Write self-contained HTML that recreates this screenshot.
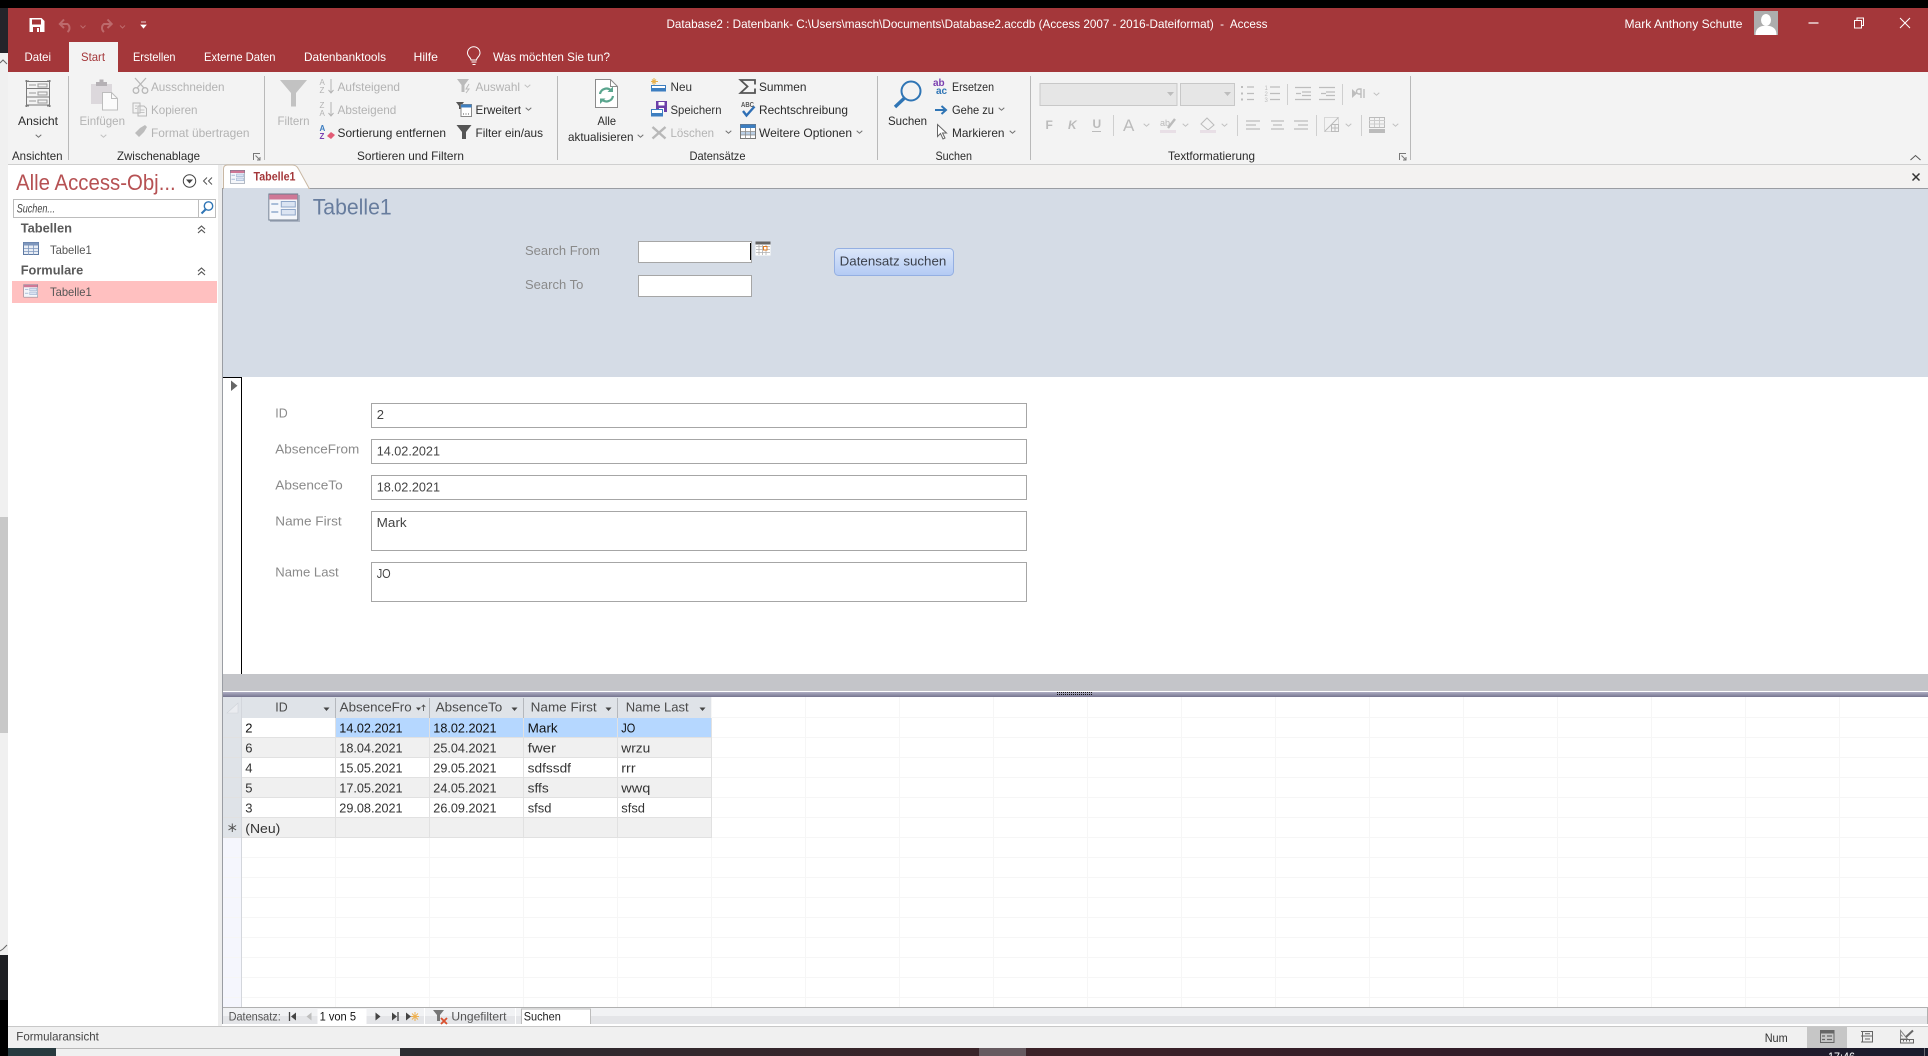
<!DOCTYPE html>
<html lang="de">
<head>
<meta charset="utf-8">
<title>Database2 - Access</title>
<style>
html,body{margin:0;padding:0;width:1928px;height:1056px;overflow:hidden;background:#000}
svg{display:block;position:absolute;left:0;top:0}
text{font-family:"Liberation Sans",sans-serif;font-size:12px;fill:#2b2b2b;white-space:pre}
.w{fill:#fff}
.d{fill:#b3b3b3}
.n{fill:#333}
.f{font-size:13px;fill:#444}
.l{font-size:13px;fill:#8a8a8a}
.g{font-size:13px;fill:#333}
.h{font-size:13px;fill:#4a4a4a}
.b{font-weight:bold;font-size:13px;fill:#5a5a5a}
.s{font-size:12px;fill:#555}
</style>
</head>
<body>
<svg width="1928" height="1056" viewBox="0 0 1928 1056" xmlns="http://www.w3.org/2000/svg">
<defs>
<linearGradient id="task" x1="0" x2="1" y1="0" y2="0">
<stop offset="0" stop-color="#273b40"/><stop offset=".22" stop-color="#2c2c30"/><stop offset=".55" stop-color="#3c2228"/><stop offset=".8" stop-color="#301c28"/><stop offset="1" stop-color="#191b2c"/>
</linearGradient>
<linearGradient id="btn" x1="0" x2="0" y1="0" y2="1"><stop offset="0" stop-color="#dce7f9"/><stop offset="1" stop-color="#b3caf4"/></linearGradient>
<linearGradient id="split" x1="0" x2="0" y1="0" y2="1"><stop offset="0" stop-color="#b0afc4"/><stop offset="1" stop-color="#75748f"/></linearGradient>
<symbol id="chev" viewBox="0 0 7 4"><path d="M.7.7 3.5 3.2 6.3.7" fill="none" stroke="#6f6f6f" stroke-width="1"/></symbol>
<symbol id="chevd" viewBox="0 0 7 4"><path d="M.7.7 3.5 3.2 6.3.7" fill="none" stroke="#c0c0c0" stroke-width="1"/></symbol>
<symbol id="frm" viewBox="0 0 30 27">
<rect x="0" y="0" width="30" height="27" fill="#6c7a8c"/>
<rect x="1" y="1" width="28" height="25" fill="#f4f6fa"/>
<rect x="1" y="1" width="28" height="5" fill="#cf7896"/>
<rect x="3" y="9.500" width="7" height="2" fill="#a9bdd8"/>
<rect x="3" y="17.500" width="7" height="2" fill="#a9bdd8"/>
<rect x="13" y="8" width="14" height="5.500" fill="#dbe4f2" stroke="#8fa6c8"/>
<rect x="13" y="16" width="14" height="5.500" fill="#dbe4f2" stroke="#8fa6c8"/>
</symbol>
<symbol id="dbl" viewBox="0 0 9 9"><path d="M1 4.200 4.500 1 8 4.200M1 8 4.500 4.800 8 8" fill="none" stroke="#555" stroke-width="1.100"/></symbol>
</defs>

<!-- backdrop -->
<rect width="1928" height="1056" fill="#000"/>
<rect x="0" y="0" width="8" height="53" fill="#23242a"/>
<rect x="0" y="0" width="1928" height="8" fill="#000"/>
<rect x="0" y="53" width="8" height="902" fill="#f0f0f0"/>
<rect x="0" y="517" width="8" height="216" fill="#c8c8c8"/>
<path d="M0 63 3 60 7 64M0 951 3 949 7 945" fill="none" stroke="#666" stroke-width="1"/>
<rect x="0" y="955" width="8" height="45" fill="#1f2024"/>

<!-- title bar -->
<rect x="8" y="8" width="1920" height="64" fill="#a4373a"/>
<path d="M29.500 18h12l3 3v11h-15z" fill="#fff"/>
<rect x="32" y="19.500" width="9" height="5" fill="#a4373a"/>
<rect x="33" y="27" width="7" height="5" fill="#a4373a"/><rect x="37" y="28" width="2" height="4" fill="#fff"/>
<g fill="none" stroke="#bd6a6c" stroke-width="2">
<path d="M60 24h7.500a5 5 0 0 1 0 8"/><path d="M64 19.500 59.800 24 64 28"/>
<path d="M111.500 24H104a5 5 0 0 0 0 8"/><path d="M107.500 19.500 111.700 24 107.500 28"/>
</g>
<path d="M80.500 25.500 83 28l2.500-2.500M120 25.500l2.500 2.500 2.500-2.500" fill="none" stroke="#bd6a6c"/>
<path d="M141 22h5M141 25h5l-2.500 3z" fill="#fff" stroke="#fff" stroke-width=".8"/>
<text class="w" x="666.500" y="28" textLength="601" lengthAdjust="spacingAndGlyphs">Database2 : Datenbank- C:\Users\masch\Documents\Database2.accdb (Access 2007 - 2016-Dateiformat)  -  Access</text>
<text class="w" x="1624.500" y="28" textLength="118" lengthAdjust="spacingAndGlyphs">Mark Anthony Schutte</text>
<rect x="1754" y="11" width="24" height="24" fill="#adadad"/>
<ellipse cx="1766" cy="20" rx="5" ry="6" fill="#fff"/>
<path d="M1755.500 35c0-6 3-8 7-9h7c4 1 7 3 7 9z" fill="#fff"/>
<path d="M1808.500 23h10" stroke="#fff" stroke-width="1.200"/>
<path d="M1854.500 20.500h7v7.500h-7zM1857 20.500V18h6.500v7.500h-2" fill="none" stroke="#fff"/>
<path d="M1900 18l10 10M1910 18l-10 10" stroke="#fff" stroke-width="1"/>

<!-- tabs -->
<rect x="69" y="42" width="49" height="30" fill="#f3f3f3"/>
<text class="w" x="24.500" y="61" textLength="26.500" lengthAdjust="spacingAndGlyphs">Datei</text>
<text x="81" y="61" textLength="24" lengthAdjust="spacingAndGlyphs" style="fill:#a4373a">Start</text>
<text class="w" x="133" y="61" textLength="42.500" lengthAdjust="spacingAndGlyphs">Erstellen</text>
<text class="w" x="204" y="61" textLength="71.500" lengthAdjust="spacingAndGlyphs">Externe Daten</text>
<text class="w" x="304" y="61" textLength="82" lengthAdjust="spacingAndGlyphs">Datenbanktools</text>
<text class="w" x="413.500" y="61" textLength="24.500" lengthAdjust="spacingAndGlyphs">Hilfe</text>
<path d="M471 60c0-2.500-3.500-3.500-3.500-7a6 6 0 0 1 12.500 0c0 3.500-3.500 4.500-3.500 7z M471.500 62h5M472.500 64.500h3" fill="none" stroke="#fff" stroke-width="1"/>
<text class="w" x="493" y="61" textLength="117" lengthAdjust="spacingAndGlyphs">Was möchten Sie tun?</text>

<!-- ribbon -->
<rect x="8" y="72" width="1920" height="92" fill="#f3f3f3"/>
<rect x="8" y="164" width="1920" height="1" fill="#cfcfcf"/>
<path d="M68.500 76V160M264.500 76V160M557.500 76V160M877.500 76V160M1030.500 76V160M1410.500 76V160" stroke="#b9b9b9"/>

<!-- Ansichten -->
<g fill="none" stroke="#7a7a7a" stroke-width="1">
<path d="M26.500 80v27M49.500 80v27M25 81h4M47 81h4M25 106h4M47 106h4M26 88.500h24M26 97h24M26 105h24M26 81.500h24"/>
<path d="M29 85h7M38 84h9v3h-9zM29 93h7M38 92h9v3h-9zM29 101h7M38 100h9v3h-9z" stroke="#999"/>
</g>
<text x="18" y="125" textLength="40" lengthAdjust="spacingAndGlyphs">Ansicht</text>
<use href="#chev" x="35" y="134" width="7" height="4"/>
<text x="12" y="160" textLength="50.500" lengthAdjust="spacingAndGlyphs">Ansichten</text>

<!-- Zwischenablage -->
<rect x="91" y="84" width="21" height="20" fill="#dcd8dc"/>
<rect x="96" y="82" width="11" height="4" fill="#b5b1b5"/><rect x="99.500" y="79.500" width="4" height="4" fill="#b5b1b5"/>
<path d="M102.500 92.500h9l6 6v11.500h-15z" fill="#fbfbfb" stroke="#bdbdbd"/>
<path d="M111.500 92.500v6h6" fill="none" stroke="#bdbdbd"/>
<text class="d" x="79.500" y="125" textLength="45.500" lengthAdjust="spacingAndGlyphs">Einfügen</text>
<use href="#chevd" x="100" y="134" width="7" height="4"/>
<g fill="none" stroke="#b8b8b8" stroke-width="1.300">
<path d="M135 78l9 10M146 78l-9 10"/><circle cx="136" cy="90.500" r="2.800"/><circle cx="145" cy="90.500" r="2.800"/>
<path d="M133 103h7l0 10h-7zM138 106h6l2.500 2.500v7.500H138z" stroke-width="1"/><path d="M140 110h4.500M140 112.500h4.500M135 106h2M135 108.500h2" stroke-width=".8"/>
</g>
<path d="M135 133l5-5 4 4-5 5zM140 128l5-3 2 2-3 5z" fill="#bcbcbc"/>
<text class="d" x="151" y="91" textLength="73.500" lengthAdjust="spacingAndGlyphs">Ausschneiden</text>
<text class="d" x="151" y="114" textLength="46.500" lengthAdjust="spacingAndGlyphs">Kopieren</text>
<text class="d" x="151" y="137" textLength="98.500" lengthAdjust="spacingAndGlyphs">Format übertragen</text>
<text x="117" y="160" textLength="83" lengthAdjust="spacingAndGlyphs">Zwischenablage</text>
<path d="M253.500 160v-6.500h6.500M255.500 155.500l4 4M260 157v3h-3" fill="none" stroke="#777"/>

<!-- Sortieren und Filtern -->
<path d="M280 80h27l-11 13v13.500h-5V93z" fill="#c2c2c2"/>
<text class="d" x="277.500" y="125" textLength="32" lengthAdjust="spacingAndGlyphs">Filtern</text>
<text class="d" x="319.500" y="85" style="font-size:8px">A</text><text class="d" x="319.500" y="93" style="font-size:8px">Z</text>
<text class="d" x="319.500" y="108" style="font-size:8px">Z</text><text class="d" x="319.500" y="116" style="font-size:8px">A</text>
<text x="319.500" y="131" style="font-size:8px;fill:#3a7cc0;font-weight:bold">A</text><text x="319.500" y="139" style="font-size:8px;fill:#7a3fb0;font-weight:bold">Z</text>
<path d="M331 79v13M328.500 90l2.500 3 2.500-3M331 102v13M328.500 113l2.500 3 2.500-3" fill="none" stroke="#b3b3b3"/>
<path d="M327 136l4-4 4 3-4 4z" fill="#e25c76"/>
<text class="d" x="337.500" y="91" textLength="62.500" lengthAdjust="spacingAndGlyphs">Aufsteigend</text>
<text class="d" x="337.500" y="114" textLength="58.800" lengthAdjust="spacingAndGlyphs">Absteigend</text>
<text x="337.500" y="137" textLength="108.500" lengthAdjust="spacingAndGlyphs">Sortierung entfernen</text>
<path d="M457 79h12l-4.500 6v7h-3v-7z" fill="#bbb"/><path d="M469 84l-3 5h3l-3 4" fill="none" stroke="#bbb"/>
<path d="M456 102h8l-3 4v3h-2v-3z" fill="#555"/>
<rect x="461" y="104.500" width="10.500" height="12" fill="#fff" stroke="#888"/><rect x="461" y="104.500" width="10.500" height="3" fill="#3d7ec0"/><path d="M463 114h1M465.500 114h1M468 114h1" stroke="#555"/>
<path d="M456.500 125h15l-5.500 7v7h-4v-7z" fill="#555"/>
<text class="d" x="475.500" y="91" textLength="44.500" lengthAdjust="spacingAndGlyphs">Auswahl</text>
<use href="#chevd" x="524" y="84" width="7" height="4"/>
<text x="475.500" y="114" textLength="45.500" lengthAdjust="spacingAndGlyphs">Erweitert</text>
<use href="#chev" x="525" y="107" width="7" height="4"/>
<text x="475.500" y="137" textLength="67.500" lengthAdjust="spacingAndGlyphs">Filter ein/aus</text>
<text x="357" y="160" textLength="107" lengthAdjust="spacingAndGlyphs">Sortieren und Filtern</text>

<!-- Datensaetze -->
<path d="M595.500 79.500h15l7 7v21h-22z" fill="#fff" stroke="#8b8b8b"/>
<path d="M610.500 79.500v7h7" fill="none" stroke="#8b8b8b"/>
<path d="M600 94a6.500 6.500 0 0 1 11-3.500M613 96a6.500 6.500 0 0 1-11 3.500" fill="none" stroke="#5aa58e" stroke-width="2.200"/>
<path d="M613 86.500v5.500h-5.500zM600 104v-5.500h5.500z" fill="#5aa58e"/>
<text x="597.500" y="125" textLength="18.500" lengthAdjust="spacingAndGlyphs">Alle</text>
<text x="568" y="141" textLength="65.500" lengthAdjust="spacingAndGlyphs">aktualisieren</text>
<use href="#chev" x="637" y="134" width="7" height="4"/>
<path d="M654 78v7M651 81.500h7M652 79.500l4 4M656 79.500l-4 4" stroke="#e8b04a"/>
<rect x="651.500" y="85.500" width="14" height="5.500" fill="#fff" stroke="#3d7ec0"/><rect x="651.500" y="88" width="14" height="3" fill="#3d7ec0"/>
<rect x="656" y="101" width="11" height="11" fill="#6b3fa8"/><rect x="658.500" y="102" width="6" height="3.500" fill="#fff"/><rect x="659" y="108" width="5" height="4" fill="#fff"/>
<rect x="651.500" y="109.500" width="11" height="6.500" fill="#fff" stroke="#3d7ec0"/><rect x="651.500" y="113" width="11" height="3" fill="#3d7ec0"/>
<path d="M652.500 127l13 11.500M665.500 127l-13 11.500" stroke="#b8b8b8" stroke-width="2.400"/>
<use href="#chev" x="725" y="130" width="7" height="4"/>
<text class="n" x="670.500" y="91" textLength="21.500" lengthAdjust="spacingAndGlyphs">Neu</text>
<text class="n" x="670.500" y="114" textLength="51" lengthAdjust="spacingAndGlyphs">Speichern</text>
<text class="d" x="670.500" y="137" textLength="43.500" lengthAdjust="spacingAndGlyphs">Löschen</text>
<path d="M755 84.500v-4.500h-14.500l7 6.500-7 6.500H755v-4.500" fill="none" stroke="#555" stroke-width="1.800"/>
<text x="741" y="107" style="font-size:7px;fill:#555;font-weight:bold" textLength="13" lengthAdjust="spacingAndGlyphs">ABC</text>
<path d="M743 111l3.500 4.500 8-9" fill="none" stroke="#2f6fb5" stroke-width="2.400"/>
<rect x="740.500" y="124.500" width="15" height="14" fill="#fff" stroke="#777"/><rect x="740.500" y="124.500" width="15" height="3.500" fill="#3d7ec0"/>
<rect x="741" y="132" width="14" height="3" fill="#bcd0e6"/><path d="M745.500 128v10.500M750.500 128v10.500M741 131.500h14M741 135h14" stroke="#888" stroke-width=".8"/>
<text x="759" y="91" textLength="47.500" lengthAdjust="spacingAndGlyphs">Summen</text>
<text x="759" y="114" textLength="89" lengthAdjust="spacingAndGlyphs">Rechtschreibung</text>
<text x="759" y="137" textLength="93" lengthAdjust="spacingAndGlyphs">Weitere Optionen</text>
<use href="#chev" x="856" y="130" width="7" height="4"/>
<text x="689.500" y="160" textLength="56" lengthAdjust="spacingAndGlyphs">Datensätze</text>

<!-- Suchen -->
<circle cx="911" cy="91" r="9.500" fill="none" stroke="#2f75b5" stroke-width="2"/>
<path d="M904 98.500 895 107" stroke="#2f75b5" stroke-width="3.400"/>
<text x="888" y="125" textLength="39" lengthAdjust="spacingAndGlyphs">Suchen</text>
<text x="933" y="86" style="font-size:10px;fill:#7a3fb0;font-weight:bold">ab</text>
<text x="936" y="94" style="font-size:10px;fill:#2f75b5;font-weight:bold">ac</text>
<path d="M935 110h11M941.500 106l4.500 4-4.500 4" fill="none" stroke="#2f75b5" stroke-width="2"/>
<path d="M937.500 124.500v12l3-3 2.500 5.500 2-1-2.500-5h4z" fill="#fff" stroke="#666"/>
<text x="952" y="91" textLength="42" lengthAdjust="spacingAndGlyphs">Ersetzen</text>
<text x="952" y="114" textLength="42" lengthAdjust="spacingAndGlyphs">Gehe zu</text>
<use href="#chev" x="998" y="107" width="7" height="4"/>
<text x="952" y="137" textLength="52.500" lengthAdjust="spacingAndGlyphs">Markieren</text>
<use href="#chev" x="1009" y="130" width="7" height="4"/>
<text x="935.500" y="160" textLength="36.500" lengthAdjust="spacingAndGlyphs">Suchen</text>

<!-- Textformatierung -->
<rect x="1040" y="83.500" width="137" height="22" fill="#e6e6e6" stroke="#c8c8c8"/>
<rect x="1180.500" y="83.500" width="54" height="22" fill="#e6e6e6" stroke="#c8c8c8"/>
<path d="M1167 92h7l-3.500 4zM1224 92h7l-3.500 4z" fill="#bdbdbd"/>
<g fill="none" stroke="#bdbdbd" stroke-width="1.200">
<path d="M1247 87h7M1247 93.500h7M1247 99.500h7M1270 87h10M1270 93.500h10M1270 99.500h10"/>
<path d="M1295 87.500h16M1302 92h9M1302 95.500h9M1295 99.500h16M1319 87.500h16M1326 92h9M1326 95.500h9M1319 99.500h16"/>
<path d="M1296 93.500h5M1326 93.500h-5"/>
<path d="M1287.500 84v21M1342.500 84v21M1113.500 115v21M1237.500 115v21M1316.500 115v21M1361.500 115v21" stroke="#cfcfcf" stroke-width="1"/>
<path d="M1246 121h14M1246 125h10M1246 129h14M1271 121h13M1273 125h9M1271 129h13M1294 121h14M1298 125h10M1294 129h14"/>
</g>
<path d="M1241 86h2v2h-2zM1241 92.500h2v2h-2zM1241 98.500h2v2h-2z" fill="#bdbdbd"/>
<text x="1264.500" y="90" style="font-size:6px;fill:#bdbdbd">1</text><text x="1264.500" y="96" style="font-size:6px;fill:#bdbdbd">2</text><text x="1264.500" y="102" style="font-size:6px;fill:#bdbdbd">3</text>
<path d="M1352 89v9l5-4.500z" fill="#bdbdbd"/>
<path d="M1361 98v-9h-2a2.500 2.500 0 0 0 0 5h2M1364 98v-9" fill="none" stroke="#bdbdbd" stroke-width="1.400"/>
<use href="#chevd" x="1373" y="92" width="7" height="4"/>
<text x="1045.500" y="129" style="font-size:12px;font-weight:bold;fill:#bbb">F</text>
<text x="1068" y="129" style="font-size:12px;font-weight:bold;font-style:italic;fill:#bbb">K</text>
<text x="1092.500" y="128" style="font-size:12px;font-weight:bold;fill:#bbb">U</text><path d="M1092 131.500h9" stroke="#bbb"/>
<text x="1123" y="131" style="font-size:17px;fill:#bbb">A</text>
<use href="#chevd" x="1143" y="123" width="7" height="4"/>
<text x="1160" y="126" style="font-size:9px;fill:#bbb">ab</text><path d="M1168 128l7-9" stroke="#bbb" stroke-width="2.400"/><rect x="1160" y="130" width="16" height="3" fill="#e8dfe6"/>
<use href="#chevd" x="1182" y="123" width="7" height="4"/>
<path d="M1201 124l6-6 7 7-6 5z" fill="#f3f3f3" stroke="#bbb"/><rect x="1200" y="130" width="16" height="3" fill="#e8dfe6"/>
<use href="#chevd" x="1221" y="123" width="7" height="4"/>
<path d="M1324.500 117.500h14v14h-14z" fill="none" stroke="#bbb" stroke-dasharray="1 1"/>
<path d="M1324.500 131.500l14-14M1331.500 124.500h7v7h-7zM1335 124v7M1331 128h7" fill="none" stroke="#bbb"/>
<use href="#chevd" x="1345" y="123" width="7" height="4"/>
<rect x="1369.500" y="117.500" width="15" height="10" fill="#f3f3f3" stroke="#bbb"/><path d="M1369 120.500h16M1369 124h16M1374.500 118v9M1379.500 118v9" stroke="#ccc"/>
<rect x="1369" y="129" width="16" height="4" fill="#bbb"/>
<use href="#chevd" x="1392" y="123" width="7" height="4"/>
<text x="1168" y="160" textLength="87" lengthAdjust="spacingAndGlyphs">Textformatierung</text>
<path d="M1399.500 160v-6.500h6.500M1401.500 155.500l4 4M1406 157v3h-3" fill="none" stroke="#777"/>
<path d="M1910.500 160l5-4.500 5 4.500" fill="none" stroke="#555"/>

<!-- document tab strip -->
<rect x="222" y="165" width="1706" height="23" fill="#f3f2f1"/>
<rect x="222" y="188" width="1706" height="1" fill="#9a9da3"/>
<path d="M223.500 189v-20q0-4 4-4h65q4 0 6 4l11 20z" fill="#fff" stroke="#c9b8a4"/>
<rect x="224" y="188" width="84" height="1.500" fill="#d5dce6"/>
<use href="#frm" x="230" y="169.500" width="15" height="14.500"/>
<text x="253.500" y="180.700" textLength="42" lengthAdjust="spacingAndGlyphs" style="font-weight:bold;fill:#a4373a">Tabelle1</text>
<path d="M1912.500 173.500l7 7M1919.500 173.500l-7 7" stroke="#333" stroke-width="1.500"/>

<!-- nav pane -->
<rect x="8" y="165" width="210" height="862" fill="#fff"/>
<rect x="218" y="165" width="4" height="862" fill="#ededed"/>
<text x="16" y="190" textLength="159.700" lengthAdjust="spacingAndGlyphs" style="font-size:22px;fill:#b65153">Alle Access-Obj...</text>
<circle cx="189.500" cy="181" r="6.200" fill="none" stroke="#444"/>
<path d="M186 179.500h7l-3.500 4z" fill="#444"/>
<path d="M207 177.500l-3.500 3.500 3.500 3.500M212 177.500l-3.500 3.500 3.500 3.500" fill="none" stroke="#555"/>
<rect x="13.500" y="199.500" width="202" height="18" fill="#fff" stroke="#bdbdbd"/>
<path d="M198.500 199.500v18" stroke="#bdbdbd"/>
<text x="16.700" y="212.300" textLength="38.300" lengthAdjust="spacingAndGlyphs" style="font-style:italic;fill:#444">Suchen...</text>
<circle cx="208.500" cy="206" r="4.200" fill="none" stroke="#2f75b5" stroke-width="1.400"/><path d="M205.500 209.500l-4 4" stroke="#2f75b5" stroke-width="2"/>
<text class="b" x="20.700" y="232.700" textLength="51.300" lengthAdjust="spacingAndGlyphs">Tabellen</text>
<use href="#dbl" x="197" y="225" width="9" height="9"/>
<rect x="23.500" y="242.500" width="15" height="12" fill="#e8edf5" stroke="#5f7aa3"/>
<rect x="23.500" y="242.500" width="15" height="3" fill="#7e97bd"/>
<path d="M28.500 243v12M33.500 243v12M24 248.500h14M24 251.500h14" stroke="#7e97bd" stroke-width=".8"/>
<text class="s" x="50" y="254" textLength="41.700" lengthAdjust="spacingAndGlyphs">Tabelle1</text>
<text class="b" x="20.700" y="274.700" textLength="62.600" lengthAdjust="spacingAndGlyphs">Formulare</text>
<use href="#dbl" x="197" y="267" width="9" height="9"/>
<rect x="12" y="281" width="205" height="22" fill="#ffc0c0"/>
<use href="#frm" x="23.500" y="284" width="14.500" height="13.700"/>
<text class="s" x="50" y="296" textLength="41.700" lengthAdjust="spacingAndGlyphs">Tabelle1</text>

<!-- form header -->
<rect x="222" y="189" width="1706" height="188" fill="#d5dce6"/>
<rect x="222" y="189" width="1" height="818" fill="#9a9da3"/>
<rect x="270" y="195" width="30" height="27" fill="#aab3c2"/>
<use href="#frm" x="268.300" y="193.300" width="30" height="27.400"/>
<text x="312.700" y="214.300" textLength="79" lengthAdjust="spacingAndGlyphs" style="font-size:22px;fill:#687d9e">Tabelle1</text>
<text class="l" x="525" y="255" textLength="75" lengthAdjust="spacingAndGlyphs">Search From</text>
<text class="l" x="525" y="289" textLength="58.300" lengthAdjust="spacingAndGlyphs">Search To</text>
<rect x="638.500" y="241.500" width="113" height="21" fill="#fff" stroke="#a6a6a6"/>
<rect x="638.500" y="275.500" width="113" height="21" fill="#fff" stroke="#a6a6a6"/>
<rect x="750" y="243" width="1" height="17" fill="#000"/>
<rect x="755.500" y="241.500" width="15" height="14" fill="#fff"/>
<rect x="755.500" y="241.500" width="15" height="3" fill="#666"/>
<path d="M756 246.500h14M756 249.500h14M756 252.500h14M759 245v10M762.500 245v10M766 245v10" stroke="#b0b0b0" stroke-width=".8"/>
<rect x="763.500" y="246.500" width="3.500" height="3.500" fill="#fff" stroke="#e07a1f"/>
<rect x="834.500" y="248.500" width="119" height="27" rx="4" fill="url(#btn)" stroke="#94afe2"/>
<text x="839.700" y="265.700" textLength="106.600" lengthAdjust="spacingAndGlyphs" style="font-size:13px;fill:#3a3f4a">Datensatz suchen</text>

<!-- form detail -->
<rect x="223" y="377" width="1705" height="297" fill="#fff"/>
<path d="M223 377.500h18.500M241.500 377v297" fill="none" stroke="#000"/>
<path d="M231 380.500v10.500l6.500-5.200z" fill="#666"/>
<text class="l" x="275.300" y="417.700" textLength="12.400" lengthAdjust="spacingAndGlyphs">ID</text>
<text class="l" x="275.300" y="453.700" textLength="84" lengthAdjust="spacingAndGlyphs">AbsenceFrom</text>
<text class="l" x="275.300" y="489.700" textLength="67.400" lengthAdjust="spacingAndGlyphs">AbsenceTo</text>
<text class="l" x="275.300" y="525.700" textLength="66.400" lengthAdjust="spacingAndGlyphs">Name First</text>
<text class="l" x="275.300" y="576.700" textLength="63.400" lengthAdjust="spacingAndGlyphs">Name Last</text>
<g fill="#fff" stroke="#a6a6a6">
<rect x="371.500" y="403.500" width="655" height="24"/>
<rect x="371.500" y="439.500" width="655" height="24"/>
<rect x="371.500" y="475.500" width="655" height="24"/>
<rect x="371.500" y="511.500" width="655" height="39"/>
<rect x="371.500" y="562.500" width="655" height="39"/>
</g>
<text class="f" x="376.700" y="419">2</text>
<text class="f" x="376.700" y="455.300" textLength="63.300" lengthAdjust="spacingAndGlyphs">14.02.2021</text>
<text class="f" x="376.700" y="491.300" textLength="63.300" lengthAdjust="spacingAndGlyphs">18.02.2021</text>
<text class="f" x="376.700" y="527" textLength="30" lengthAdjust="spacingAndGlyphs">Mark</text>
<text class="f" x="376.700" y="578" textLength="14" lengthAdjust="spacingAndGlyphs">JO</text>

<!-- splitter -->
<rect x="223" y="674" width="1705" height="17" fill="#c4c5c9"/>
<rect x="223" y="691" width="1705" height="1" fill="#fff"/>
<rect x="223" y="692" width="1705" height="5" fill="url(#split)"/>
<path d="M1057 692.500h35" stroke="#111" stroke-dasharray="1 1"/>
<path d="M1057 694.500h35" stroke="#111" stroke-dasharray="1 1"/>

<!-- datasheet -->
<rect x="223" y="697" width="1705" height="310" fill="#fff"/>
<rect x="223" y="697" width="489" height="21" fill="#dfe3e8"/>
<rect x="223" y="718" width="19" height="120" fill="#dfe3e8"/>
<rect x="223" y="838" width="19" height="169" fill="#f5f6fd"/>
<path d="M227 713l11-10v10z" fill="#eaecf0" stroke="#cfd3d9" stroke-width=".6"/>
<rect x="336" y="718" width="376" height="20" fill="#b5d7ff"/>
<rect x="242" y="738" width="470" height="20" fill="#f0f0f0"/>
<rect x="242" y="778" width="470" height="20" fill="#f0f0f0"/>
<rect x="242" y="818" width="470" height="20" fill="#f0f0f0"/>
<path d="M805.500 697V1007M899.500 697V1007M993.500 697V1007M1087.500 697V1007M1181.500 697V1007M1275.500 697V1007M1369.500 697V1007M1463.500 697V1007M1557.500 697V1007M1651.500 697V1007M1745.500 697V1007M1839.500 697V1007M711.500 697V1007" stroke="#f6f6f6"/>
<path d="M335.500 838V1007M429.500 838V1007M523.500 838V1007M617.500 838V1007" stroke="#f6f6f6"/>
<path d="M712 717.500H1928M712 737.500H1928M712 757.500H1928M712 777.500H1928M712 797.500H1928M712 817.500H1928M712 837.500H1928M242 857.500H1928M242 877.500H1928M242 897.500H1928M242 917.500H1928M242 937.500H1928M242 957.500H1928M242 977.500H1928M242 997.500H1928M223 857.500H242M223 877.500H242M223 897.500H242M223 917.500H242M223 937.500H242M223 957.500H242M223 977.500H242M223 997.500H242" stroke="#f6f6f6"/>
<path d="M223 737.500H712M223 757.500H712M223 777.500H712M223 797.500H712M223 817.500H712M223 837.500H712" stroke="#e1e1e1"/>
<path d="M335.500 718V838M429.500 718V838M523.500 718V838M617.500 718V838M711.500 718V838" stroke="#e1e1e1"/>
<path d="M241.500 697V1007" stroke="#d3d6dc"/>
<path d="M335.500 698V718M429.500 698V718M523.500 698V718M617.500 698V718" stroke="#b5b8bd"/>
<path d="M323.500 707.500h6l-3 3.500zM416 707.500h5l-2.500 3zM511.500 707.500h6l-3 3.500zM605.500 707.500h6l-3 3.500zM699.500 707.500h6l-3 3.500z" fill="#444"/>
<path d="M423.500 711v-6M421.700 707l1.800-2 1.800 2" fill="none" stroke="#444" stroke-width=".8"/>
<text class="h" x="275.300" y="711.700" textLength="12.400" lengthAdjust="spacingAndGlyphs">ID</text>
<text class="h" x="339.700" y="711.700" textLength="72" lengthAdjust="spacingAndGlyphs">AbsenceFro</text>
<text class="h" x="435.700" y="711.700" textLength="66.600" lengthAdjust="spacingAndGlyphs">AbsenceTo</text>
<text class="h" x="530.700" y="711.700" textLength="66" lengthAdjust="spacingAndGlyphs">Name First</text>
<text class="h" x="625.700" y="711.700" textLength="63" lengthAdjust="spacingAndGlyphs">Name Last</text>

<text class="g" x="245.300" y="732.700" style="fill:#111">2</text>
<text class="g" x="339.300" y="732.700" textLength="63.300" lengthAdjust="spacingAndGlyphs" style="fill:#111">14.02.2021</text>
<text class="g" x="433.300" y="732.700" textLength="63.300" lengthAdjust="spacingAndGlyphs" style="fill:#111">18.02.2021</text>
<text class="g" x="527.700" y="732.700" textLength="30" lengthAdjust="spacingAndGlyphs" style="fill:#111">Mark</text>
<text class="g" x="621.300" y="732.700" textLength="14" lengthAdjust="spacingAndGlyphs" style="fill:#111">JO</text>

<text class="g" x="245.300" y="752.700">6</text>
<text class="g" x="339.300" y="752.700" textLength="63.300" lengthAdjust="spacingAndGlyphs">18.04.2021</text>
<text class="g" x="433.300" y="752.700" textLength="63.300" lengthAdjust="spacingAndGlyphs">25.04.2021</text>
<text class="g" x="527.700" y="752.700" textLength="28.300" lengthAdjust="spacingAndGlyphs">fwer</text>
<text class="g" x="621.300" y="752.700" textLength="29" lengthAdjust="spacingAndGlyphs">wrzu</text>

<text class="g" x="245.300" y="772.700">4</text>
<text class="g" x="339.300" y="772.700" textLength="63.300" lengthAdjust="spacingAndGlyphs">15.05.2021</text>
<text class="g" x="433.300" y="772.700" textLength="63.300" lengthAdjust="spacingAndGlyphs">29.05.2021</text>
<text class="g" x="527.700" y="772.700" textLength="43.300" lengthAdjust="spacingAndGlyphs">sdfssdf</text>
<text class="g" x="621.300" y="772.700" textLength="14.300" lengthAdjust="spacingAndGlyphs">rrr</text>

<text class="g" x="245.300" y="792.700">5</text>
<text class="g" x="339.300" y="792.700" textLength="63.300" lengthAdjust="spacingAndGlyphs">17.05.2021</text>
<text class="g" x="433.300" y="792.700" textLength="63.300" lengthAdjust="spacingAndGlyphs">24.05.2021</text>
<text class="g" x="527.700" y="792.700" textLength="21" lengthAdjust="spacingAndGlyphs">sffs</text>
<text class="g" x="621.300" y="792.700" textLength="29" lengthAdjust="spacingAndGlyphs">wwq</text>

<text class="g" x="245.300" y="812.700">3</text>
<text class="g" x="339.300" y="812.700" textLength="63.300" lengthAdjust="spacingAndGlyphs">29.08.2021</text>
<text class="g" x="433.300" y="812.700" textLength="63.300" lengthAdjust="spacingAndGlyphs">26.09.2021</text>
<text class="g" x="527.700" y="812.700" textLength="23.700" lengthAdjust="spacingAndGlyphs">sfsd</text>
<text class="g" x="621.300" y="812.700" textLength="23.700" lengthAdjust="spacingAndGlyphs">sfsd</text>

<text class="g" x="245.300" y="833" textLength="35" lengthAdjust="spacingAndGlyphs">(Neu)</text>
<path d="M232.300 823.500v8.500M228.500 825.500l7.600 4.400M236.100 825.500l-7.600 4.400" stroke="#555"/>

<!-- record navigation -->
<rect x="222" y="1007" width="1706" height="1" fill="#b0b0b0"/>
<rect x="222" y="1008" width="1706" height="8" fill="#f1f2f4"/>
<rect x="222" y="1016" width="1706" height="8" fill="#e4e5e8"/>
<rect x="222" y="1024" width="1706" height="2" fill="#fff"/>
<rect x="222" y="1007" width="1" height="17" fill="#9a9da3"/>
<rect x="1927" y="1007" width="1" height="17" fill="#b0b0b0"/>
<text class="s" x="228.600" y="1020.700" textLength="52.200" lengthAdjust="spacingAndGlyphs" style="fill:#555">Datensatz:</text>
<path d="M289.500 1012v9" stroke="#444" stroke-width="1.300"/><path d="M296 1012.500v8l-5-4z" fill="#444"/>
<path d="M311.500 1012.500v8l-5-4z" fill="#bdbdbd"/>
<rect x="317.500" y="1009" width="49" height="15" fill="#fff"/>
<text x="319.600" y="1020.700" textLength="36.400" lengthAdjust="spacingAndGlyphs" style="fill:#111">1 von 5</text>
<path d="M375.500 1012.500v8l5-4z" fill="#444"/>
<path d="M392 1012.500v8l5-4z" fill="#444"/><path d="M398 1012v9" stroke="#444" stroke-width="1.300"/>
<path d="M406 1012.500v8l5-4z" fill="#444"/>
<path d="M415 1012v9M411 1016.500h8M412 1013.500l6 6M418 1013.500l-6 6" stroke="#eeb04e"/>
<path d="M424.500 1008v16M515.500 1008v16" stroke="#fff"/>
<path d="M433 1010h11l-4 5v6h-3v-6z" fill="#777"/>
<path d="M441 1018l6 6M447 1018l-6 6" stroke="#d9502e" stroke-width="1.800"/>
<text class="s" x="451.400" y="1020.700" textLength="55.100" lengthAdjust="spacingAndGlyphs">Ungefiltert</text>
<path d="M521.500 1024v-15h69v15" fill="#fff" stroke="#bdbdbd"/>
<text x="523.700" y="1020.700" textLength="37.100" lengthAdjust="spacingAndGlyphs" style="fill:#222">Suchen</text>

<!-- status bar -->
<rect x="8" y="1026" width="1920" height="1" fill="#c8c8c8"/>
<rect x="8" y="1027" width="1920" height="21" fill="#f0f0f0"/>
<text x="16.300" y="1040.700" textLength="82.500" lengthAdjust="spacingAndGlyphs" style="fill:#444">Formularansicht</text>
<text x="1764.700" y="1042" textLength="23" lengthAdjust="spacingAndGlyphs" style="fill:#333">Num</text>
<rect x="1807" y="1027" width="40" height="21" fill="#c6c6c6"/>
<rect x="1820.500" y="1030.500" width="13.500" height="12" fill="none" stroke="#666"/>
<rect x="1820" y="1030" width="14" height="3.500" fill="#666"/>
<path d="M1822 1036h3M1822 1039.500h3M1827 1036h5M1827 1039.500h5" stroke="#666" stroke-width="1.200"/>
<path d="M1862.500 1031v11.500M1872.500 1031v11.500M1861 1031.500h12M1861 1036h12M1861 1042h12M1865 1033.700h5M1865 1039h5" fill="none" stroke="#666"/>
<path d="M1900.500 1030.500v8.500h7zM1900.500 1034.500l2 2" fill="none" stroke="#888"/>
<path d="M1906 1037l7-6.500" stroke="#666" stroke-width="2"/>
<rect x="1900.500" y="1039.500" width="13" height="3.500" fill="none" stroke="#666"/>
<path d="M1903.500 1040v1.500M1906.500 1040v1.500M1909.500 1040v1.500" stroke="#666"/>

<!-- bottom sliver -->
<rect x="8" y="1048" width="1920" height="8" fill="url(#task)"/>
<rect x="56" y="1048" width="344" height="8" fill="#f0f0f0"/>
<rect x="56" y="1048" width="344" height="1" fill="#b8b8b8"/>
<rect x="979" y="1048" width="47" height="8" fill="#665a60"/>
<rect x="1924" y="1048" width="1" height="8" fill="#6b6b74"/>
<text x="1828" y="1061" textLength="27" lengthAdjust="spacingAndGlyphs" style="fill:#fff">17:46</text>
</svg>
</body>
</html>
